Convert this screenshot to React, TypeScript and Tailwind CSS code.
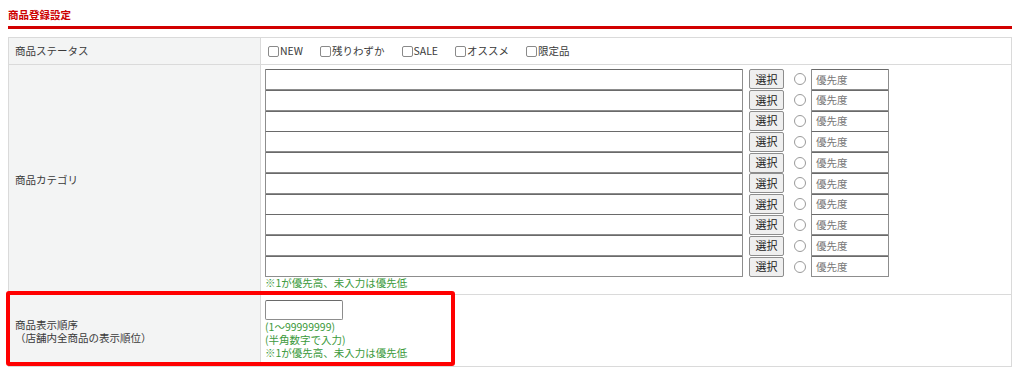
import React from "react";

const statuses = ["NEW", "残りわずか", "SALE", "オススメ", "限定品"];

function Check({ label }: { label: string }) {
  return (
    <label className="flex items-center gap-[1px]">
      <span className="inline-block w-[11px] h-[11px] border border-[#8a8a8a] rounded-[2px] bg-white" />
      <span>{label}</span>
    </label>
  );
}

function CategoryRow() {
  return (
    <div className="flex items-center h-[20.8px]">
      <div className="w-[478px] h-[21px] bg-white border border-[#8d8d8d] border-t-[#6a6a6a] rounded-[1px]" />
      <button className="ml-[6px] w-[35px] h-[20px] bg-[#efefef] border border-[#8d8d8d] rounded-[2px] text-[#222] text-[11px] leading-none flex items-center justify-center">
        選択
      </button>
      <span className="ml-[10px] w-[12px] h-[12px] rounded-full border border-[#9a9a9a] bg-white" />
      <div className="ml-[5px] w-[78px] h-[21px] bg-white border border-[#8d8d8d] border-t-[#6a6a6a] rounded-[1px] flex items-center pl-[4px] text-[#777] text-[10.5px]">
        優先度
      </div>
    </div>
  );
}

export default function App() {
  return (
    <div className="w-[1024px] h-[370px] bg-white overflow-hidden pl-[8px] font-['Noto_Sans_CJK_JP','Noto_Sans',sans-serif] text-[#3a3a3a] text-[10.5px]">
      <div className="w-[1004px]">
        <div className="h-[26px] flex items-center font-bold text-[#cc0000] text-[10.5px] pt-[4px]">
          商品登録設定
        </div>
        <div className="h-[3px] bg-[#d20000]" />
        <div className="mt-[8px] border border-[#dadada]">
          {/* Row 1 */}
          <div className="flex h-[27px] border-b border-[#dadada]">
            <div className="w-[252px] bg-[#f3f4f4] border-r border-[#dadada] flex items-center pl-[6px]">
              商品ステータス
            </div>
            <div className="flex-1 flex items-center pl-[7px] gap-[17px]">
              {statuses.map((s) => (
                <Check key={s} label={s} />
              ))}
            </div>
          </div>
          {/* Row 2 */}
          <div className="flex h-[230px] border-b border-[#dadada]">
            <div className="w-[252px] bg-[#f3f4f4] border-r border-[#dadada] flex items-center pl-[6px]">
              商品カテゴリ
            </div>
            <div className="flex-1 pl-[4px] pt-[4px] flex flex-col">
              {Array.from({ length: 10 }).map((_, i) => (
                <CategoryRow key={i} />
              ))}
              <div className="text-[#3b9a3b] leading-[12px]">
                ※1が優先高、未入力は優先低
              </div>
            </div>
          </div>
          {/* Row 3 */}
          <div className="relative flex h-[71px]">
            <div className="w-[252px] bg-[#f3f4f4] border-r border-[#dadada] flex flex-col justify-center pl-[6px] leading-[13px]">
              <div>商品表示順序</div>
              <div>（店舗内全商品の表示順位）</div>
            </div>
            <div className="flex-1 pl-[4px] pt-[5px] flex flex-col">
              <div className="w-[78px] h-[20px] bg-white border border-[#8d8d8d] border-t-[#6a6a6a] rounded-[2px]" />
              <div className="text-[#3b9a3b] leading-[13px]">
                <div>(1～99999999)</div>
                <div>(半角数字で入力)</div>
                <div>※1が優先高、未入力は優先低</div>
              </div>
            </div>
            <div className="absolute left-[-3px] top-[-4px] w-[449px] h-[75px] border-[4px] border-[#ff0000] rounded-[3px] pointer-events-none" />
          </div>
        </div>
      </div>
    </div>
  );
}
